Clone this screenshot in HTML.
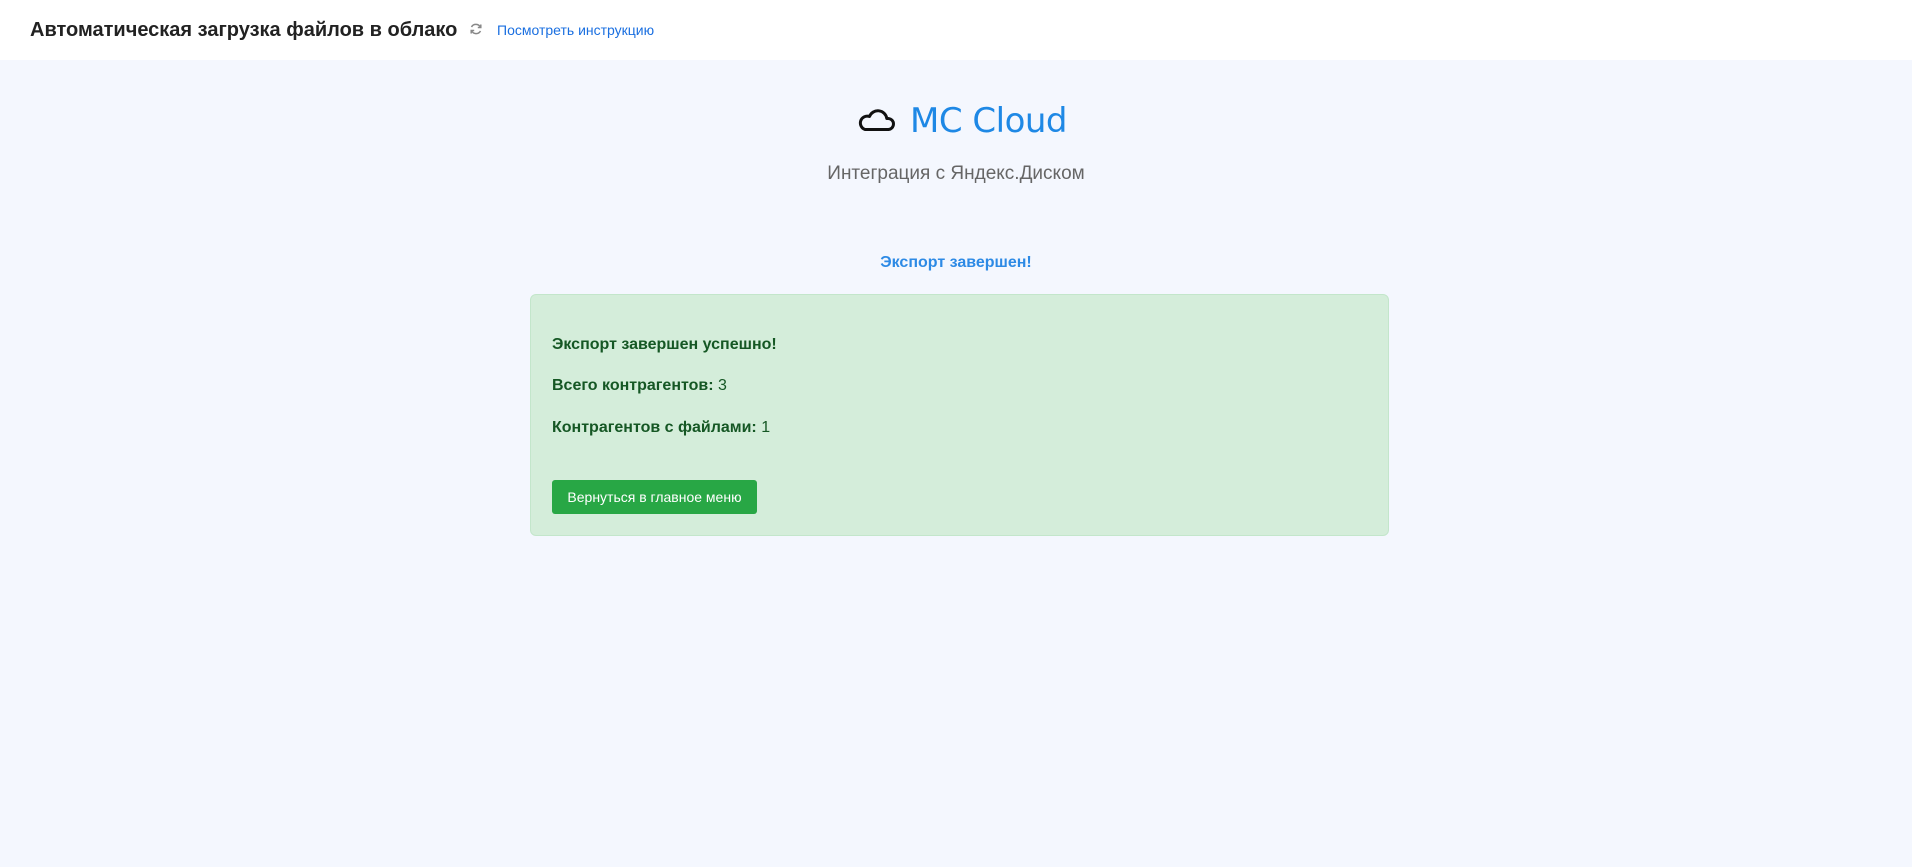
<!DOCTYPE html>
<html><head><meta charset="utf-8"><style>
*{margin:0;padding:0;box-sizing:border-box}
body{width:1912px;height:867px;background:#f4f7fe;font-family:"Liberation Sans",sans-serif;position:relative;overflow:hidden}
.hdr{position:absolute;left:0;top:0;width:1912px;height:60px;background:#fff}
.t{position:absolute;left:30px;top:19px;font-size:20px;font-weight:bold;color:#222}
.ref{position:absolute;left:469px;top:22px}
.lnk{position:absolute;left:497px;top:22px;font-size:14px;color:#1a6fe0}
.mc{position:absolute;left:910px;top:101px;font-size:34px;color:#1e88e5;font-family:"DejaVu Sans",sans-serif;letter-spacing:-0.5px}
.sub{position:absolute;left:0;width:1912px;top:163px;text-align:center;font-size:19px;color:#666}
.done{position:absolute;left:0;width:1912px;top:254px;text-align:center;font-size:16px;font-weight:bold;color:#2d8ae5}
.card{position:absolute;left:530px;top:294px;width:859px;height:242px;background:#d4edda;border:1px solid #c3e6cb;border-radius:6px}
.p{position:absolute;left:21px;font-size:16px;font-weight:bold;color:#155724}
.p span{font-weight:normal}
.btn{position:absolute;left:21px;top:185px;width:205px;height:34px;background:#28a745;border-radius:3px;color:#fff;font-size:14px;text-align:center;line-height:34px}
</style></head><body>
<div class="hdr">
<div class="t">Автоматическая загрузка файлов в облако</div>
<svg class="ref" width="14" height="14" viewBox="0 0 14 14" fill="none" stroke="#888" stroke-width="1.5"><path d="M11.5 5.5A5 5 0 0 0 2.5 5M2.5 8.5A5 5 0 0 0 11.5 9"/><path d="M11.8 2.5v3h-3M2.2 11.5v-3h3"/></svg>
<div class="lnk">Посмотреть инструкцию</div>
</div>
<svg style="position:absolute;left:857px;top:109px" width="38" height="22" viewBox="0 0 38 22" fill="none" stroke="#111" stroke-width="3" stroke-linejoin="round"><path d="M8 20.5h23a5.5 5.5 0 0 0 0-11h-1.2A9 9 0 0 0 12.5 7.5 6.5 6.5 0 0 0 8 20.5z"/></svg>
<div class="mc">MC Cloud</div>
<div class="sub">Интеграция с Яндекс.Диском</div>
<div class="done">Экспорт завершен!</div>
<div class="card">
<div class="p" style="top:41px">Экспорт завершен успешно!</div>
<div class="p" style="top:82px">Всего контрагентов: <span>3</span></div>
<div class="p" style="top:124px">Контрагентов с файлами: <span>1</span></div>
<div class="btn">Вернуться в главное меню</div>
</div>
</body></html>
